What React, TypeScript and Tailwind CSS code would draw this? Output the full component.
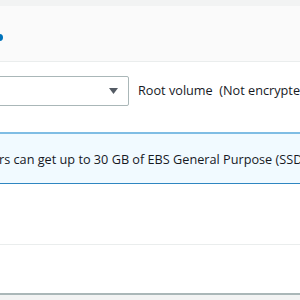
import React from "react";

export default function App() {
  return (
    <div
      className="w-[300px] h-[300px] overflow-hidden bg-white flex flex-col text-[#16191f]"
      style={{ fontFamily: '"Open Sans", "Noto Sans", sans-serif' }}
    >
      <div className="h-[6px] shrink-0 bg-[#f2f3f3]" />
      <div className="h-[56px] shrink-0 bg-[#fafafa] border-b border-[#eaeded] flex items-start">
        <div className="mt-[28px] ml-[-4px] w-[7px] h-[7px] rounded-full bg-[#0073bb]" />
      </div>
      <div className="shrink-0 flex items-center mt-[14px] h-[30px]">
        <div className="ml-[-12px] w-[141px] h-[30px] shrink-0 border border-[#aab7b8] rounded-[2px] bg-white flex items-center justify-end pr-[10px]">
          <svg width="9" height="6" viewBox="0 0 9 6">
            <path d="M0 0 H9 L4.5 6 Z" fill="#545b64" />
          </svg>
        </div>
        <span className="ml-[9px] whitespace-nowrap text-[12.7px] text-[#16191f]">
          Root volume&nbsp;&nbsp;(Not encrypted)
        </span>
      </div>
      <div className="shrink-0 mt-[26px] h-[52px] bg-[#f1faff] border-t-2 border-t-[#7fbde4] border-b border-b-[#2e86c1] flex items-center pt-[3px]">
        <span className="ml-[-1px] whitespace-nowrap text-[12.7px] text-[#16191f]">
          rs can get up to 30 GB of EBS General Purpose (SSD) or Magnetic storage
        </span>
      </div>
      <div className="h-[61px] shrink-0 border-b border-[#eaeded]" />
      <div className="h-[48px] shrink-0" />
      <div className="flex-1 bg-[#f2f3f3] border-t-2 border-[#aab7b8]" />
    </div>
  );
}
